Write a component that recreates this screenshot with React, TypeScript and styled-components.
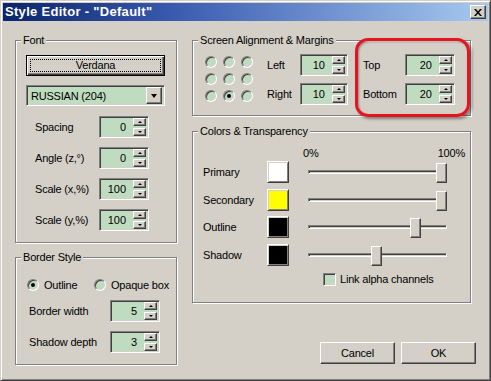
import React from 'react';
import styled, { createGlobalStyle, css } from 'styled-components';

const FACE = '#d4d0c8';
const FIELD = '#c0dcc0';

const GlobalStyle = createGlobalStyle`
  html, body {
    margin: 0;
    padding: 0;
    background: ${FACE};
  }
  body {
    font-family: "Liberation Sans", Arial, sans-serif;
    font-size: 11px;
    color: #000;
  }
`;

const raised = css`
  box-sizing: border-box;
  border: 1px solid;
  border-color: #fff #404040 #404040 #fff;
  box-shadow: inset -1px -1px 0 #808080;
  background: ${FACE};
`;

const sunken = css`
  box-sizing: border-box;
  border: 1px solid;
  border-color: #808080 #fff #fff #808080;
  box-shadow: inset 1px 1px 0 #404040, inset -1px -1px 0 ${FACE};
`;

const Window = styled.div`
  box-sizing: border-box;
  width: 491px;
  height: 381px;
  padding: 2px;
  border: 1px solid;
  border-color: ${FACE} #404040 #404040 ${FACE};
  box-shadow: inset 1px 1px 0 #fff, inset -1px -1px 0 #808080;
  background: ${FACE};
  letter-spacing: -0.2px;
  white-space: nowrap;
`;

const TitleBar = styled.div`
  height: 18px;
  display: flex;
  align-items: center;
  justify-content: space-between;
  padding: 0 2px 0 2px;
  background: linear-gradient(90deg, #0a246a 0%, #3a5ab0 35%, #a6caf0 100%);
`;

const Title = styled.span`
  color: #fff;
  font-weight: bold;
  font-size: 13px;
  letter-spacing: 0.3px;
  line-height: 18px;
`;

const CloseButton = styled.div`
  ${raised};
  width: 16px;
  height: 14px;
  display: flex;
  align-items: center;
  justify-content: center;
`;

const Body = styled.div`
  display: flex;
  gap: 15px;
  padding: 19px 0 0 12px;
`;

const Column = styled.div<{ $w: number }>`
  width: ${(p) => p.$w}px;
  display: flex;
  flex-direction: column;
`;

const Group = styled.div<{ $pb?: number; $mt?: number; $w?: number }>`
  box-sizing: border-box;
  width: ${(p) => (p.$w ? `${p.$w}px` : 'auto')};
  margin-top: ${(p) => p.$mt ?? 0}px;
  border: 1px solid #808080;
  box-shadow: 1px 1px 0 #fff, inset 1px 1px 0 #fff;
  padding: 0 10px ${(p) => p.$pb ?? 10}px 10px;
`;

const Legend = styled.div`
  width: fit-content;
  margin: -7px 0 0 -5px;
  padding: 0 2px;
  line-height: 13px;
  background: ${FACE};
`;

const FontButton = styled.div`
  box-sizing: border-box;
  width: 139px;
  height: 21px;
  margin-top: 8px;
  border: 1px solid #000;
  box-shadow: inset 1px 1px 0 #fff, inset -1px -1px 0 #404040, inset -2px -2px 0 #808080;
  padding: 3px;
  display: flex;
`;

const FocusRect = styled.div`
  flex: 1;
  border: 1px dotted #000;
  display: flex;
  align-items: center;
  justify-content: center;
  line-height: 11px;
`;

const Combo = styled.div`
  ${sunken};
  width: 139px;
  height: 21px;
  margin-top: 9px;
  padding: 2px;
  display: flex;
  align-items: center;
  background: ${FIELD};
`;

const ComboText = styled.span`
  flex: 1;
  padding-left: 2px;
`;

const DropButton = styled.div`
  ${raised};
  width: 16px;
  height: 17px;
  display: flex;
  align-items: center;
  justify-content: center;
`;

const DownArrow = styled.div`
  width: 0;
  height: 0;
  border-left: 3.5px solid transparent;
  border-right: 3.5px solid transparent;
  border-top: 4px solid #000;
`;

const Fields = styled.div<{ $label: number; $pl: number; $mt: number }>`
  display: grid;
  grid-template-columns: ${(p) => p.$label}px auto;
  row-gap: 9px;
  align-items: center;
  padding-left: ${(p) => p.$pl}px;
  margin-top: ${(p) => p.$mt}px;
`;

const SpinFrame = styled.div<{ $w: number }>`
  ${sunken};
  width: ${(p) => p.$w}px;
  height: 22px;
  padding: 2px 2px 2px 2px;
  display: flex;
  align-items: center;
  background: ${FIELD};
`;

const SpinValue = styled.span`
  flex: 1;
  text-align: right;
  padding-right: 7px;
  letter-spacing: 0;
`;

const SpinArrows = styled.div`
  width: 13px;
  display: flex;
  flex-direction: column;
  gap: 2px;
`;

const ArrowButton = styled.div`
  ${raised};
  height: 8px;
  display: flex;
  align-items: center;
  justify-content: center;
`;

const Tri = styled.div<{ $up?: boolean }>`
  width: 0;
  height: 0;
  border-left: 2px solid transparent;
  border-right: 2px solid transparent;
  ${(p) => (p.$up ? 'border-bottom: 2px solid #000;' : 'border-top: 2px solid #000;')}
`;

const AlignRow = styled.div`
  display: flex;
  margin-top: 7px;
  padding-left: 2px;
`;

const RadioGrid = styled.div`
  display: grid;
  grid-template-columns: repeat(3, 12px);
  column-gap: 6px;
  row-gap: 5px;
  margin-top: 2px;
  margin-right: 14px;
  align-content: start;
`;

const RadioCircle = styled.div<{ $checked?: boolean }>`
  box-sizing: border-box;
  width: 12px;
  height: 12px;
  flex: none;
  border-radius: 50%;
  border: 1px solid;
  border-color: #808080 #fff #fff #808080;
  box-shadow: inset 1px 1px 0 #404040, inset -1px -1px 0 ${FACE};
  background: ${FIELD};
  display: flex;
  align-items: center;
  justify-content: center;
  &::after {
    content: '';
    width: 4px;
    height: 4px;
    border-radius: 50%;
    background: ${(p) => (p.$checked ? '#000' : 'transparent')};
  }
`;

const MarginColumn = styled.div<{ $label: number; $ml: number }>`
  position: relative;
  display: grid;
  grid-template-columns: ${(p) => p.$label}px auto;
  row-gap: 7px;
  align-items: center;
  align-content: start;
  margin-left: ${(p) => p.$ml}px;
`;

const Highlight = styled.div`
  position: absolute;
  top: -16px;
  left: -8px;
  right: -15px;
  bottom: -12px;
  border: 3px solid #e5141e;
  border-radius: 13px;
  box-shadow: 2px 2px 3px rgba(0, 0, 0, 0.4), inset 1px 1px 2px rgba(0, 0, 0, 0.35);
  pointer-events: none;
`;

const ScaleHeader = styled.div`
  display: flex;
  justify-content: space-between;
  width: 162px;
  margin: 9px 0 0 100px;
  line-height: 13px;
`;

const ColorRows = styled.div`
  display: grid;
  grid-template-columns: 64px 22px auto;
  grid-auto-rows: 22px;
  row-gap: 5.5px;
  align-items: center;
  margin-top: 1px;
`;

const Swatch = styled.div<{ $color: string }>`
  box-sizing: border-box;
  width: 22px;
  height: 22px;
  border: 1px solid;
  border-color: #fff #404040 #404040 #fff;
  box-shadow: inset 1px 1px 0 ${FACE}, inset -1px -1px 0 #808080;
  background: ${(p) => p.$color};
`;

const Slider = styled.div`
  position: relative;
  width: 139px;
  height: 22px;
  margin-left: 19px;
  display: flex;
  align-items: center;
`;

const Track = styled.div`
  box-sizing: border-box;
  width: 100%;
  height: 4px;
  border: 1px solid;
  border-color: #808080 #fff #fff #808080;
  box-shadow: inset 1px 1px 0 #404040;
  background: ${FACE};
`;

const Thumb = styled.div`
  ${raised};
  position: absolute;
  top: 2px;
  width: 11px;
  height: 20px;
`;

const CheckRow = styled.label`
  display: flex;
  align-items: center;
  gap: 4px;
  margin: 7.5px 0 0 120px;
  line-height: 13px;
`;

const CheckBox = styled.div`
  ${sunken};
  width: 13px;
  height: 13px;
  background: ${FIELD};
`;

const OptionRow = styled.div`
  display: grid;
  grid-template-columns: 67px auto;
  margin: 15px 0 0 1px;
  line-height: 12px;
`;

const Option = styled.label`
  display: flex;
  align-items: center;
  gap: 5px;
`;

const ButtonRow = styled.div`
  display: flex;
  justify-content: flex-end;
  gap: 6px;
  margin-top: 39px;
`;

const PushButton = styled.div`
  ${raised};
  width: 75px;
  height: 22px;
  display: flex;
  align-items: center;
  justify-content: center;
`;

const Spin: React.FC<{ value: number; width?: number }> = ({ value, width = 50 }) => (
  <SpinFrame $w={width}>
    <SpinValue>{value}</SpinValue>
    <SpinArrows>
      <ArrowButton>
        <Tri $up />
      </ArrowButton>
      <ArrowButton>
        <Tri />
      </ArrowButton>
    </SpinArrows>
  </SpinFrame>
);

const fontFields = [
  { label: 'Spacing', value: 0 },
  { label: 'Angle (z,°)', value: 0 },
  { label: 'Scale (x,%)', value: 100 },
  { label: 'Scale (y,%)', value: 100 },
];

const colors = [
  { label: 'Primary', color: '#ffffff', alpha: 100 },
  { label: 'Secondary', color: '#ffff00', alpha: 100 },
  { label: 'Outline', color: '#000000', alpha: 80 },
  { label: 'Shadow', color: '#000000', alpha: 49 },
];

const THUMB_TRAVEL = 128;

export default function App() {
  return (
    <>
      <GlobalStyle />
      <Window>
        <TitleBar>
          <Title>Style Editor - "Default"</Title>
          <CloseButton>
            <svg width="8" height="7" viewBox="0 0 8 7">
              <path d="M0 0h2l2 2.4L6 0h2L5 3.5 8 7H6L4 4.6 2 7H0l3-3.5z" fill="#000" />
            </svg>
          </CloseButton>
        </TitleBar>

        <Body>
          <Column $w={162}>
            <Group $pb={11}>
              <Legend>Font</Legend>
              <FontButton>
                <FocusRect>Verdana</FocusRect>
              </FontButton>
              <Combo>
                <ComboText>RUSSIAN (204)</ComboText>
                <DropButton>
                  <DownArrow />
                </DropButton>
              </Combo>
              <Fields $label={64} $pl={9} $mt={10}>
                {fontFields.map((f) => (
                  <React.Fragment key={f.label}>
                    <span>{f.label}</span>
                    <Spin value={f.value} />
                  </React.Fragment>
                ))}
              </Fields>
            </Group>

            <Group $pb={11} $mt={14}>
              <Legend>Border Style</Legend>
              <OptionRow>
                <Option>
                  <RadioCircle $checked />
                  Outline
                </Option>
                <Option>
                  <RadioCircle />
                  Opaque box
                </Option>
              </OptionRow>
              <Fields $label={81} $pl={3} $mt={9}>
                <span>Border width</span>
                <Spin value={5} />
                <span>Shadow depth</span>
                <Spin value={3} />
              </Fields>
            </Group>
          </Column>

          <Column $w={284}>
            <Group $w={279}>
              <Legend>Screen Alignment &amp; Margins</Legend>
              <AlignRow>
                <RadioGrid>
                  {Array.from({ length: 9 }, (_, i) => (
                    <RadioCircle key={i} $checked={i === 7} />
                  ))}
                </RadioGrid>
                <MarginColumn $label={33} $ml={0}>
                  <span>Left</span>
                  <Spin value={10} width={48} />
                  <span>Right</span>
                  <Spin value={10} width={48} />
                </MarginColumn>
                <MarginColumn $label={42} $ml={15}>
                  <span>Top</span>
                  <Spin value={20} />
                  <span>Bottom</span>
                  <Spin value={20} />
                  <Highlight />
                </MarginColumn>
              </AlignRow>
            </Group>

            <Group $w={279} $mt={15} $pb={16}>
              <Legend>Colors &amp; Transparency</Legend>
              <ScaleHeader>
                <span>0%</span>
                <span>100%</span>
              </ScaleHeader>
              <ColorRows>
                {colors.map((c) => (
                  <React.Fragment key={c.label}>
                    <span>{c.label}</span>
                    <Swatch $color={c.color} />
                    <Slider>
                      <Track />
                      <Thumb style={{ left: Math.round((c.alpha / 100) * THUMB_TRAVEL) }} />
                    </Slider>
                  </React.Fragment>
                ))}
              </ColorRows>
              <CheckRow>
                <CheckBox />
                Link alpha channels
              </CheckRow>
            </Group>

            <ButtonRow>
              <PushButton>Cancel</PushButton>
              <PushButton>OK</PushButton>
            </ButtonRow>
          </Column>
        </Body>
      </Window>
    </>
  );
}
